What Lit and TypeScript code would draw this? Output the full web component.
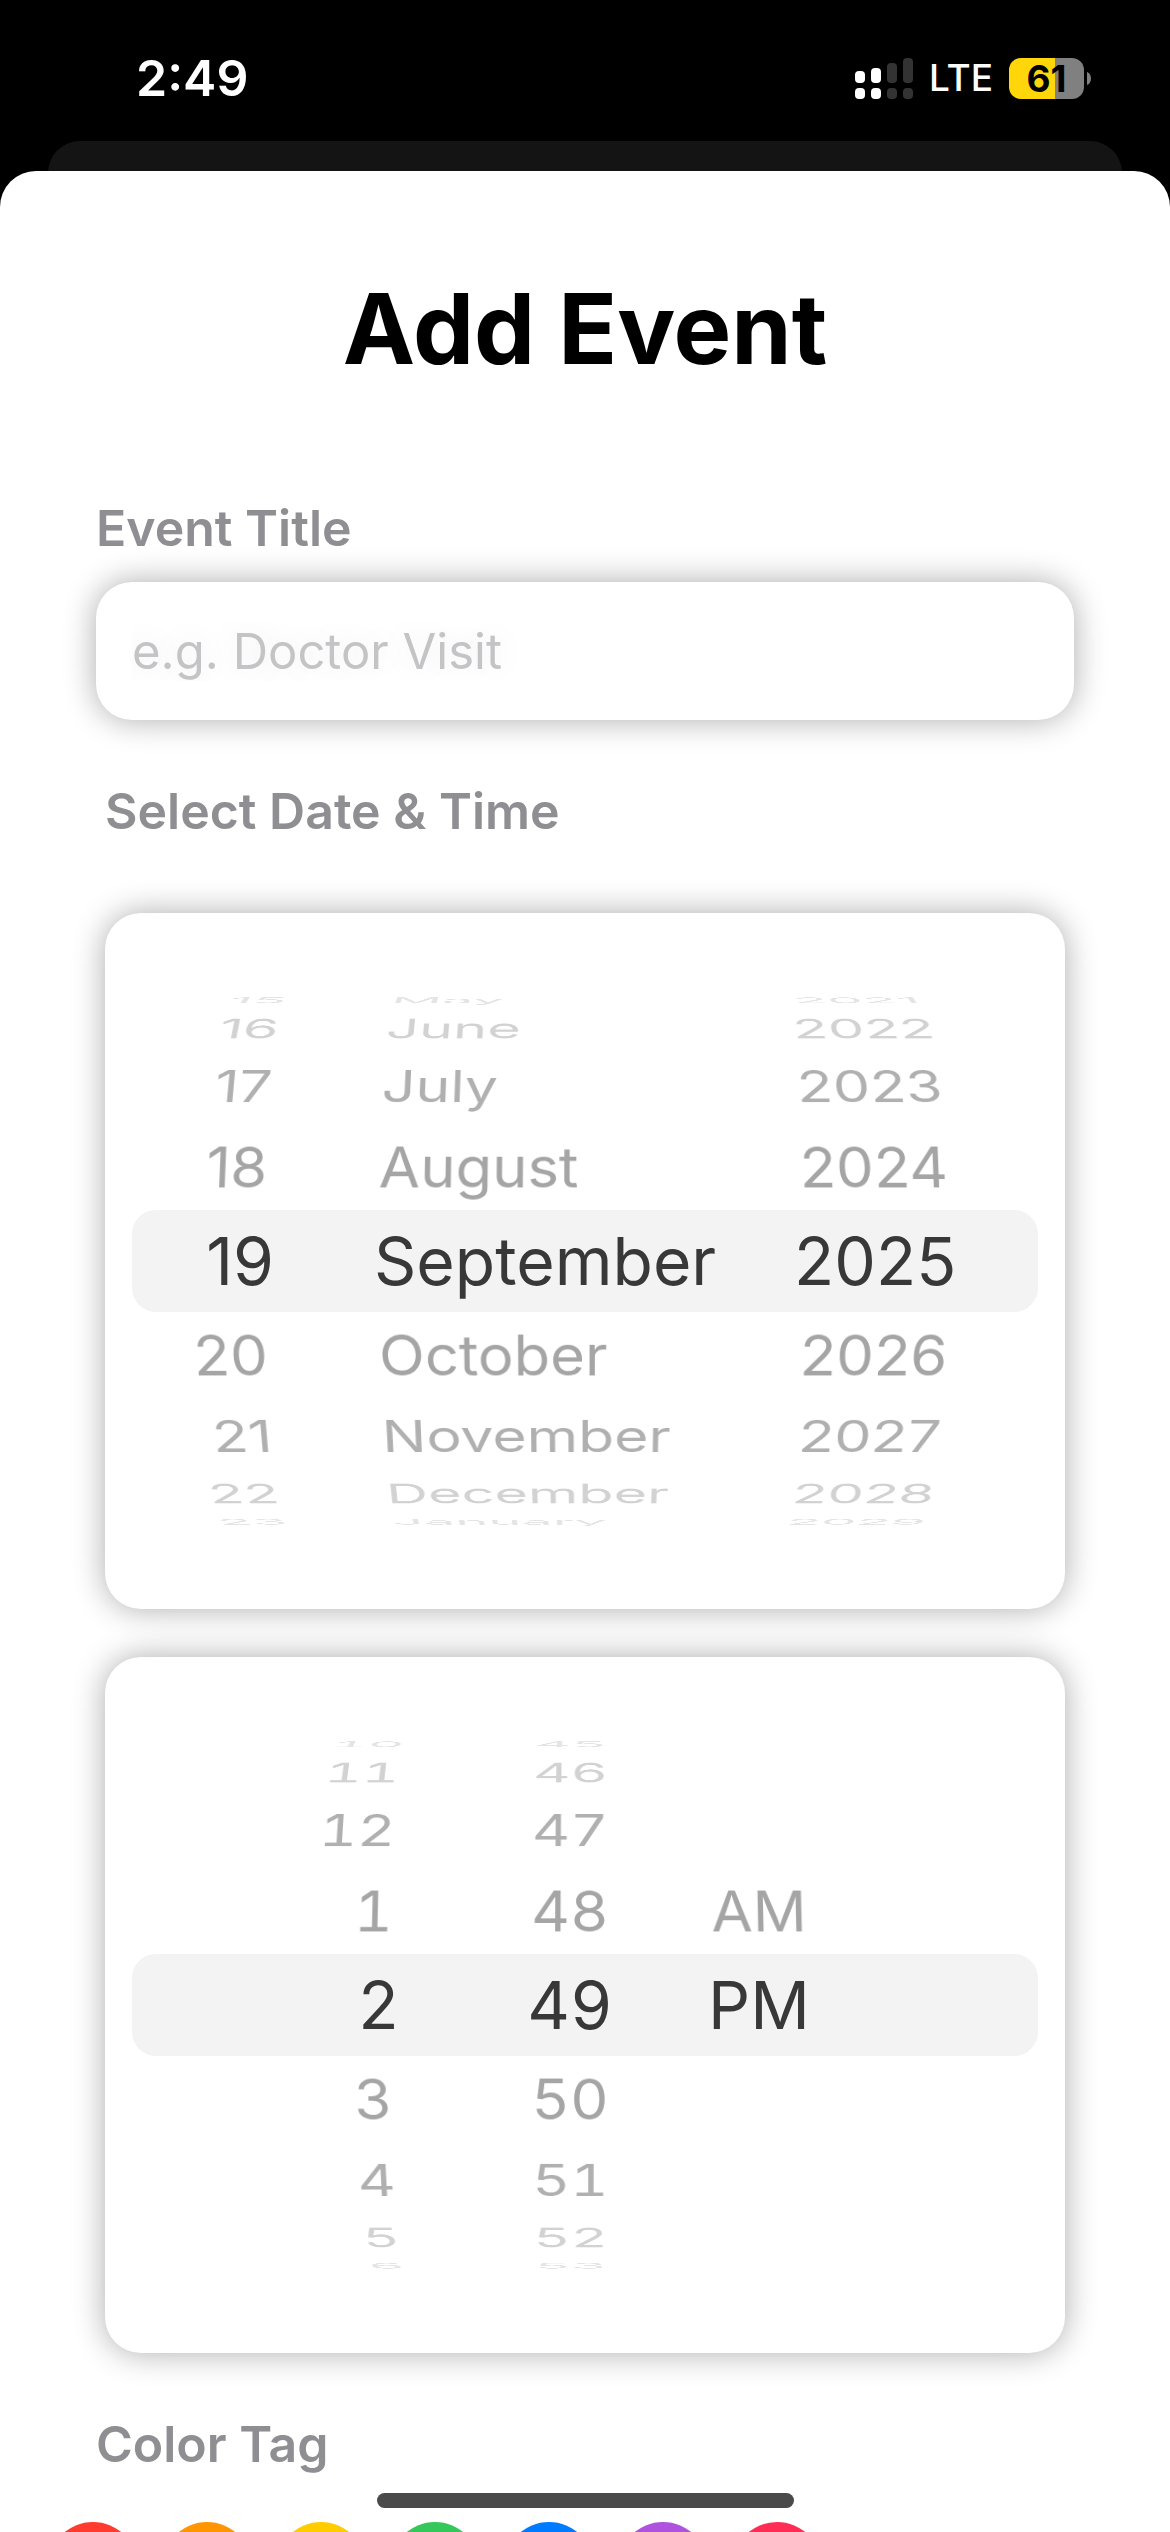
import { LitElement, html, css, svg } from "lit";
import { customElement, property, state } from "lit/decorators.js";
import { classMap } from "lit/directives/class-map.js";
import { styleMap } from "lit/directives/style-map.js";

const MONTHS = [
  "January", "February", "March", "April", "May", "June",
  "July", "August", "September", "October", "November", "December",
];
const HOURS = Array.from({ length: 12 }, (_, i) => String(i + 1));
const DAYS = Array.from({ length: 30 }, (_, i) => String(i + 1));
const MINUTES = Array.from({ length: 60 }, (_, i) => String(i).padStart(2, "0"));
const YEARS = Array.from({ length: 200 }, (_, i) => String(1925 + i));
const PERIODS = ["AM", "PM"];

const TAGS = [
  { name: "Red", color: "#ff3b30" },
  { name: "Orange", color: "#ff9500" },
  { name: "Yellow", color: "#ffcc00" },
  { name: "Green", color: "#34c759" },
  { name: "Blue", color: "#007aff" },
  { name: "Purple", color: "#af52de" },
  { name: "Pink", color: "#ff2d55" },
];

/* Geometry of the drum that the rows are wrapped around. */
const STEP_DEG = 19.3;
const RADIUS = 286;
const REACH = 4;

@customElement("wheel-column")
export class WheelColumn extends LitElement {
  static styles = css`
    :host {
      display: block;
      transform-style: preserve-3d;
    }
    .drum {
      display: grid;
      align-items: center;
      height: 100%;
      transform-style: preserve-3d;
    }
    .row {
      grid-area: 1 / 1;
      height: 102px;
      margin: 0;
      padding: 0;
      border: 0;
      background: none;
      color: #a5a5a5;
      font: inherit;
      font-size: 60px;
      line-height: 102px;
      white-space: nowrap;
      cursor: pointer;
    }
    .tabular { font-variant-numeric: tabular-nums; }
    .start { text-align: left; padding-left: 4px; }
    .center { text-align: center; }
    .end { text-align: right; padding-right: 8px; }
    .d2 { color: #b0b0b0; }
    .d3 { color: #d2d2d2; }
    .d4 { color: #e4e4e4; }
    .selected {
      color: #383838;
      font-size: 66px;
      padding-inline: 0;
    }
  `;

  @property({ attribute: false }) values: string[] = [];
  @property({ type: Number }) index = 0;
  @property({ type: Boolean }) loop = false;
  @property({ type: Boolean }) tabular = false;
  @property() align = "start";
  @property() label = "";

  private pick(i: number) {
    this.index = i;
    this.dispatchEvent(new CustomEvent("pick", { detail: i }));
  }

  render() {
    const n = this.values.length;
    const rows = [];
    for (let k = -REACH; k <= REACH; k++) {
      let i = this.index + k;
      if (this.loop) i = (i + n) % n;
      if (i < 0 || i >= n) continue;
      const classes = {
        row: true,
        tabular: this.tabular,
        [this.align]: true,
        [`d${Math.abs(k)}`]: true,
        selected: k === 0,
      };
      const place = {
        transform: `translateZ(${-RADIUS}px) rotateX(${-k * STEP_DEG}deg) translateZ(${RADIUS}px)`,
      };
      rows.push(html`<button
        type="button"
        role="option"
        aria-selected=${k === 0 ? "true" : "false"}
        class=${classMap(classes)}
        style=${styleMap(place)}
        @click=${() => this.pick(i)}
      >${this.values[i]}</button>`);
    }
    return html`<div class="drum" role="listbox" aria-label=${this.label}>${rows}</div>`;
  }
}

@customElement("status-bar")
export class StatusBar extends LitElement {
  static styles = css`
    :host {
      display: flex;
      align-items: center;
      justify-content: space-between;
      height: 156px;
      padding: 0 79px 0 136px;
      color: #fff;
      box-sizing: border-box;
    }
    .time {
      font-size: 50px;
      font-weight: 600;
      line-height: 60px;
    }
    .right {
      display: flex;
      align-items: center;
    }
    .signal { display: block; margin-right: 16px; }
    .net {
      font-size: 37px;
      font-weight: 500;
      line-height: 60px;
      margin-right: 16px;
    }
    .battery {
      display: flex;
      align-items: center;
      gap: 3px;
    }
    .cell {
      width: 75px;
      height: 41px;
      border-radius: 12px;
      background: linear-gradient(to right, #ffd60a 61%, #808080 61%);
      color: #000;
      font-size: 37px;
      font-weight: 700;
      line-height: 41px;
      text-align: center;
    }
    .nub { display: block; }
  `;

  render() {
    const bars = [
      { x: 0, y: 13, on: true },
      { x: 16, y: 10, on: true },
      { x: 32, y: 5, on: false },
      { x: 48, y: 0, on: false },
    ];
    return html`
      <span class="time">2:49</span>
      <span class="right">
        <svg class="signal" width="58" height="41" viewBox="0 0 58 41" aria-hidden="true">
          ${bars.map((b) => svg`
            <rect x=${b.x} y=${b.y} width="10" height=${25 - b.y} rx="4" fill=${b.on ? "#fff" : "#333"}></rect>
            <rect x=${b.x} y="30" width="10" height="11" rx="4" fill=${b.on ? "#fff" : "#333"}></rect>`)}
        </svg>
        <span class="net">LTE</span>
        <span class="battery">
          <span class="cell">61</span>
          <svg class="nub" width="4" height="13" viewBox="0 0 4 13" aria-hidden="true">
            <path d="M0 0C2.600 1.200 4 3.600 4 6.500S2.600 11.800 0 13Z" fill="#808080"></path>
          </svg>
        </span>
      </span>
    `;
  }
}

@customElement("app-root")
export class AppRoot extends LitElement {
  static styles = css`
    :host {
      display: block;
      position: relative;
      height: 100vh;
      overflow: hidden;
      background: #000;
      font-family: Inter, "Liberation Sans", sans-serif;
    }
    .page {
      display: flex;
      flex-direction: column;
    }
    .behind {
      height: 60px;
      margin: -15px 48px -30px;
      border-radius: 32px 32px 0 0;
      background: #141414;
    }
    .sheet {
      position: relative;
      display: flex;
      flex-direction: column;
      padding: 98px 96px 60px;
      border-radius: 36px 36px 0 0;
      background: #fff;
    }
    .title {
      margin: 0 0 109px;
      font-size: 97px;
      font-weight: 700;
      line-height: 120px;
      text-align: center;
      color: #000;
    }
    .label {
      font-size: 50px;
      font-weight: 600;
      line-height: 60px;
      color: #8e8e93;
    }
    .field {
      box-sizing: border-box;
      width: 100%;
      height: 138px;
      margin: 24px 0 61px;
      padding: 0 36px;
      border: 0;
      border-radius: 36px;
      outline: none;
      background: #fff;
      box-shadow: 0 0 32px rgba(0, 0, 0, 0.33);
      font: inherit;
      font-size: 49px;
      color: #000;
    }
    .field::placeholder {
      color: #c4c4c6;
      opacity: 1;
      text-shadow: 0 0 32px rgba(0, 0, 0, 0.1);
    }
    .when {
      display: flex;
      flex-direction: column;
      gap: 48px;
      margin: 0 9px 61px;
    }
    .when .label { margin-bottom: 24px; }
    .card {
      padding: 24px 27px;
      border-radius: 36px;
      background: #fff;
      box-shadow: 0 0 32px rgba(0, 0, 0, 0.33);
    }
    .picker {
      display: grid;
      align-items: center;
      height: 648px;
    }
    .band {
      grid-area: 1 / 1;
      height: 102px;
      border-radius: 24px;
      background: #f3f3f3;
    }
    .wheels {
      grid-area: 1 / 1;
      display: flex;
      height: 648px;
      perspective: 3200px;
      perspective-origin: center;
    }
    .day { width: 142px; margin-right: 100px; }
    .month { width: 340px; margin-right: 80px; }
    .year { width: 156px; }
    .hour { width: 268px; margin-right: 120px; }
    .minute { width: 100px; margin-right: 88px; }
    .period { width: 140px; }
    .tags {
      display: flex;
      gap: 24px;
      margin: 48px -48px 0;
    }
    .tag {
      width: 90px;
      height: 90px;
      padding: 0;
      border: 0;
      border-radius: 50%;
    }
    .home {
      position: absolute;
      left: 50%;
      bottom: 24px;
      width: 417px;
      height: 15px;
      margin-left: -208px;
      border-radius: 8px;
      background: #4a4a4a;
    }
  `;

  @state() private tag = "";

  render() {
    return html`
      <div class="page">
        <status-bar></status-bar>
        <div class="behind"></div>
        <main class="sheet">
          <h1 class="title">Add Event</h1>
          <label class="label" for="event-title">Event Title</label>
          <input class="field" id="event-title" type="text" placeholder="e.g. Doctor Visit" />

          <section class="when" aria-labelledby="when-label">
            <div class="label" id="when-label">Select Date &amp; Time</div>
            <div class="card">
              <div class="picker">
                <div class="band"></div>
                <div class="wheels">
                  <wheel-column class="day" label="Day" align="end" loop .values=${DAYS} .index=${18}></wheel-column>
                  <wheel-column class="month" label="Month" align="start" loop .values=${MONTHS} .index=${8}></wheel-column>
                  <wheel-column class="year" label="Year" align="center" .values=${YEARS} .index=${100}></wheel-column>
                </div>
              </div>
            </div>
            <div class="card">
              <div class="picker">
                <div class="band"></div>
                <div class="wheels">
                  <wheel-column class="hour" label="Hour" align="end" loop tabular .values=${HOURS} .index=${1}></wheel-column>
                  <wheel-column class="minute" label="Minute" align="center" loop tabular .values=${MINUTES} .index=${49}></wheel-column>
                  <wheel-column class="period" label="AM or PM" align="start" .values=${PERIODS} .index=${1}></wheel-column>
                </div>
              </div>
            </div>
          </section>

          <div class="label" id="tag-label">Color Tag</div>
          <div class="tags" role="group" aria-labelledby="tag-label">
            ${TAGS.map((t) => html`<button
              type="button"
              class="tag"
              aria-label=${t.name}
              aria-pressed=${this.tag === t.name ? "true" : "false"}
              style=${styleMap({ background: t.color })}
              @click=${() => { this.tag = t.name; }}
            ></button>`)}
          </div>
        </main>
      </div>
      <div class="home"></div>
    `;
  }
}
